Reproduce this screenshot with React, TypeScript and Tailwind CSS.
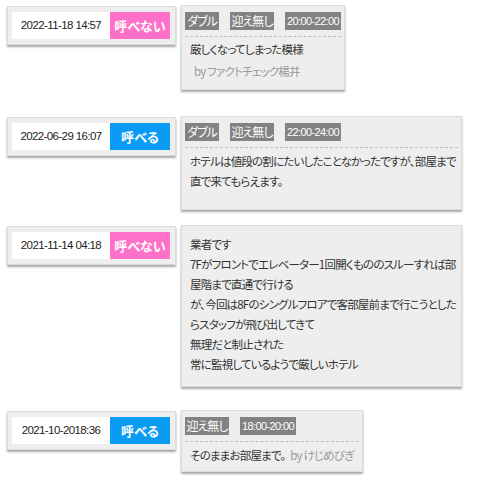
import React from 'react'

type Review = {
  date: string
  ok: boolean
  tags: string[]
  lines: string[]
  by?: string
  byInline?: boolean
  cardW: string
  rowGap: string
  bodyPad: string
}

const reviews: Review[] = [
  {
    date: '2022-11-18 14:57',
    ok: false,
    tags: ['ダブル', '迎え無し', '20:00-22:00'],
    lines: ['厳しくなってしまった模様'],
    by: 'ファクトチェック楊井',
    cardW: 'w-[164px]',
    rowGap: 'mt-[5px]',
    bodyPad: 'pt-[2px] pb-[8px]',
  },
  {
    date: '2022-06-29 16:07',
    ok: true,
    tags: ['ダブル', '迎え無し', '22:00-24:00'],
    lines: ['ホテルは値段の割にたいしたことなかったですが、部屋まで', '直で来てもらえます。'],
    cardW: 'w-[281px]',
    rowGap: 'mt-[26px]',
    bodyPad: 'pt-[3px] pb-[18px]',
  },
  {
    date: '2021-11-14 04:18',
    ok: false,
    tags: [],
    lines: [
      '業者です',
      '7Fがフロントでエレベーター1回開くもののスルーすれば部',
      '屋階まで直通で行ける',
      'が、今回は8Fのシングルフロアで客部屋前まで行こうとした',
      'らスタッフが飛び出してきて',
      '無理だと制止された',
      '常に監視しているようで厳しいホテル',
    ],
    cardW: 'w-[281px]',
    rowGap: 'mt-[15px]',
    bodyPad: 'pt-[8px] pb-[12px]',
  },
  {
    date: '2021-10-2018:36',
    ok: true,
    tags: ['迎え無し', '18:00-20:00'],
    lines: ['そのままお部屋まで。'],
    by: 'けじめびぎ',
    byInline: true,
    cardW: 'w-[182px]',
    rowGap: 'mt-[23px]',
    bodyPad: 'pt-[3px] pb-[6px]',
  },
]

const tagWidth: Record<string, string> = {
  'ダブル': 'w-[34px]',
  '迎え無し': 'w-[44px]',
}

const jp = "font-['Noto_Sans_CJK_JP',sans-serif] [font-feature-settings:'palt']"

function Tag({ label }: { label: string }) {
  const isTime = /\d/.test(label)
  return (
    <span
      className={`flex h-[18px] items-center justify-center whitespace-nowrap bg-[#828282] text-white ${
        isTime
          ? "w-[56px] font-['Liberation_Sans',sans-serif] text-[11px] tracking-[-0.6px]"
          : `${tagWidth[label]} text-[12px] tracking-[-1px]`
      }`}
    >
      {label}
    </span>
  )
}

function Row({ r }: { r: Review }) {
  return (
    <div className={`flex items-start gap-[5px] ${r.rowGap}`}>
      {/* date + call badge */}
      <div className="mt-[1px] flex border border-[#dcdcdc] bg-[#eeeeee] py-[5px] pl-[4px] pr-[5px] shadow-[0_2px_2px_rgba(0,0,0,0.35)]">
        <div className="flex h-[27px] w-[98px] items-center justify-center bg-white font-['Liberation_Sans',sans-serif] text-[11.5px] tracking-[-0.6px] text-[#222]">
          {r.date}
        </div>
        <div
          className={`flex h-[27px] w-[60px] items-center justify-center text-[13px] font-bold text-white ${
            r.ok ? 'bg-[#0a9cf5]' : 'bg-[#ff70c8]'
          }`}
        >
          {r.ok ? '呼べる' : '呼べない'}
        </div>
      </div>

      {/* comment card */}
      <div
        className={`${r.cardW} border border-[#dcdcdc] bg-[#eeeeee] shadow-[0_2px_2px_rgba(0,0,0,0.35)]`}
      >
        {r.tags.length > 0 && (
          <div className="mx-[3px] mt-[6px] flex gap-[11px] border-b border-dashed border-[#bdbdbd] pb-[6px]">
            {r.tags.map((t) => (
              <Tag key={t} label={t} />
            ))}
          </div>
        )}
        <div className={`pl-[8px] text-[11.5px] leading-[20px] tracking-[-0.8px] text-[#333] ${r.bodyPad}`}>
          {r.lines.map((l, i) => (
            <div key={i} className="whitespace-nowrap">
              {l}
              {r.byInline && i === r.lines.length - 1 && (
                <span className="ml-[5px] text-[#999]">by {r.by}</span>
              )}
            </div>
          ))}
          {r.by && !r.byInline && (
            <div className="mt-[2px] pl-[4px] text-[#999]">by {r.by}</div>
          )}
        </div>
      </div>
    </div>
  )
}

export default function App() {
  return (
    <div className={`min-h-[484px] w-[484px] bg-white pl-[7px] ${jp}`}>
      <div className="flex flex-col">
        {reviews.map((r, i) => (
          <Row key={i} r={r} />
        ))}
      </div>
    </div>
  )
}
